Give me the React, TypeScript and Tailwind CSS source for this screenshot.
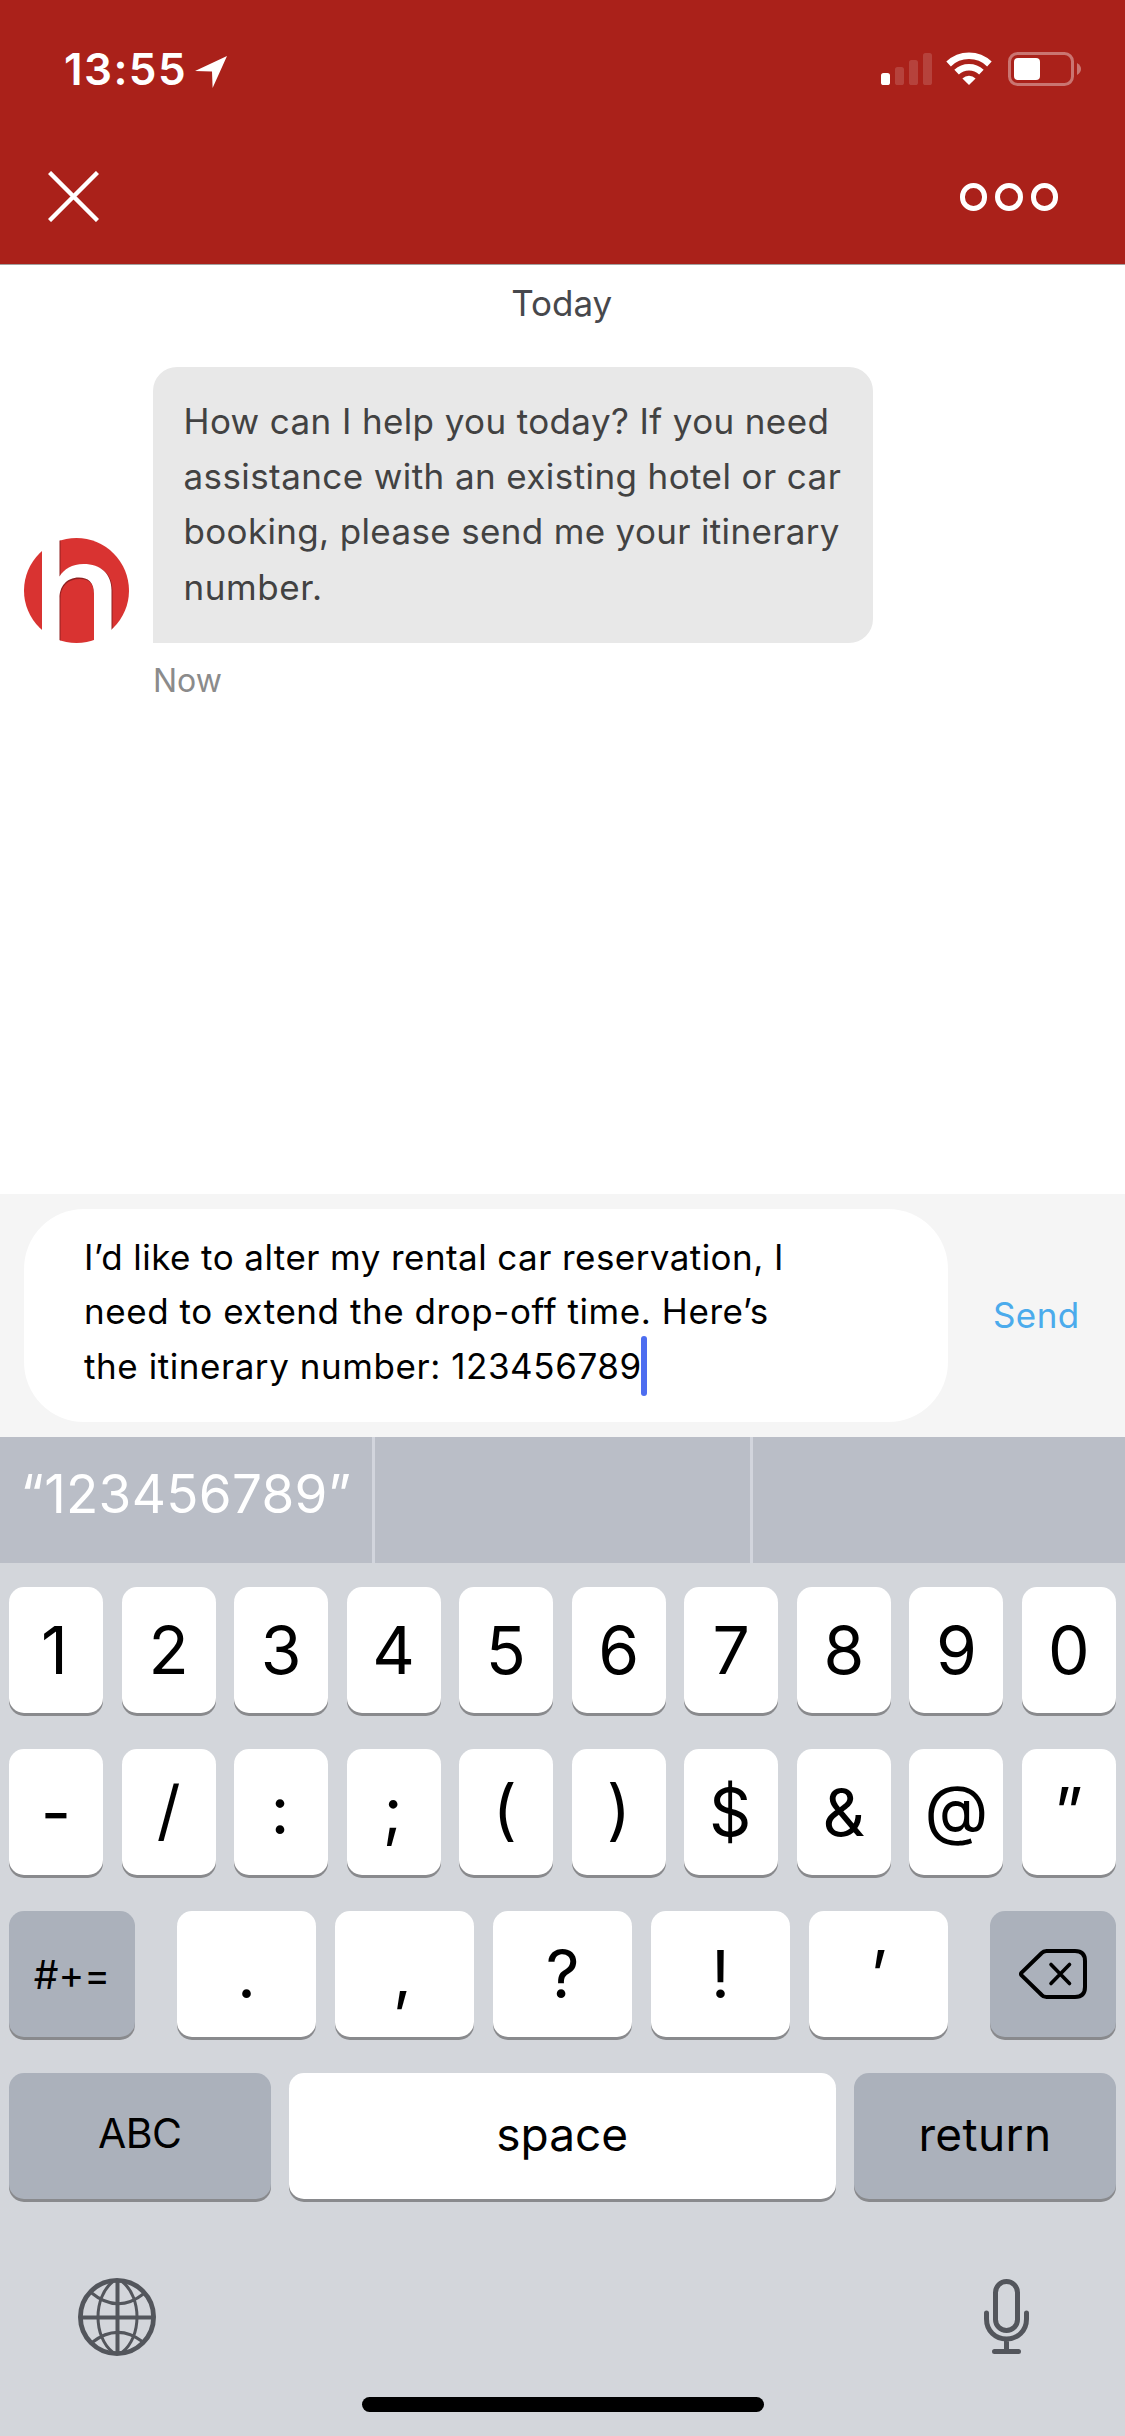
import type { ReactNode } from "react";

function LocationArrow() {
  return (
    <svg width="32" height="32" viewBox="0 0 32 32" className="ml-[8px] mt-[5px] fill-white">
      <path d="M32 0 17.6 32 17 15.4 0 15Z" />
    </svg>
  );
}

function Signal() {
  return (
    <svg width="51" height="34" viewBox="0 0 51 34" className="fill-white">
      <rect x="0" y="21" width="9" height="12" rx="2.6" />
      <g opacity="0.15">
        <rect x="14" y="15" width="9" height="18" rx="2.6" />
        <rect x="28" y="8" width="9" height="25" rx="2.6" />
        <rect x="42" y="1" width="9" height="32" rx="2.6" />
      </g>
    </svg>
  );
}

function Wifi() {
  return (
    <svg width="46" height="34" viewBox="0 0 46 34" className="ml-[14px]">
      <g fill="none" stroke="#fff" strokeWidth="6.6">
        <path d="M2.6 12A29.5 29.5 0 0 1 43.4 12" />
        <path d="M10.6 20.2A18 18 0 0 1 35.4 20.2" />
      </g>
      <path d="M23 33 16.4 26.4A9.4 9.4 0 0 1 29.6 26.4Z" fill="#fff" />
    </svg>
  );
}

function Battery() {
  return (
    <svg width="74" height="34" viewBox="0 0 74 34" className="ml-[16px]">
      <g opacity="0.38">
        <rect x="1.5" y="1.5" width="63" height="31" rx="8" fill="none" stroke="#fff" strokeWidth="3" />
        <path d="M69 11Q73 13.3 73 17T69 23Z" fill="#fff" />
      </g>
      <rect x="6" y="6" width="26" height="22" rx="4" fill="#fff" />
    </svg>
  );
}

function Avatar() {
  return (
    <svg width="105" height="105" viewBox="0 0 105 105" className="shrink-0">
      <defs>
        <clipPath id="disc">
          <circle cx="52.5" cy="52.5" r="52.5" />
        </clipPath>
      </defs>
      <circle cx="52.5" cy="52.5" r="52.5" fill="#d93331" />
      <path
        clipPath="url(#disc)"
        d="M34 0h2.500v105h-2.500ZM37 37C42 29.500 50 27 61 27 79 27 88.500 37 88.500 53V105H70V57C70 46 66 41 56 41 43 41 36.500 49 36.500 60Z"
        fill="#8f2020"
      />
      <path d="M18-2H35.500V38.500C40 31 48 26 59.500 26 77 26 87.500 36 87.500 52V107H70V56C70 44 64 39.500 55 39.500 42 39.500 35.500 49 35.500 60V107H18Z" fill="#fff" />
    </svg>
  );
}

function DeleteIcon() {
  return (
    <svg width="68" height="50" viewBox="0 0 68 50" fill="none" stroke="#000" strokeLinejoin="round" strokeLinecap="round">
      <path d="M27.500 2H56Q66 2 66 12V38Q66 48 56 48H27.500Q24.500 48 22.500 45.800L2.600 26.400Q1.400 25 2.600 23.600L22.500 4.200Q24.500 2 27.500 2Z" strokeWidth="4" />
      <path d="M32 15.500 50.500 34.500M50.500 15.500 32 34.500" strokeWidth="3.600" />
    </svg>
  );
}

function Globe() {
  return (
    <svg width="78" height="78" viewBox="0 0 78 78" fill="none" stroke="#53565c">
      <circle cx="39" cy="39" r="36.600" strokeWidth="4.800" />
      <path d="M39.500 3V75M3 39.500H75" strokeWidth="4" />
      <path d="M35 3.500C15 19 15 59 35 74.500M44 3.500C64 19 64 59 44 74.500M13 14.500Q39.500 36.500 66 15.500M14 64.500Q39.500 44.500 65 64" strokeWidth="3" />
    </svg>
  );
}

function Mic() {
  return (
    <svg width="46" height="76" viewBox="0 0 46 76" fill="none" stroke="#53565c" strokeWidth="5" strokeLinecap="round">
      <rect x="11.500" y="2.500" width="22" height="49" rx="11" />
      <path d="M2.500 34V40C2.500 52 11.500 60 22.500 60S42.500 52 42.500 40V34M22.500 61V72M10.500 72.500H34.500" />
    </svg>
  );
}

function Key({ children, dark = false, size = "w-[94px]" }: { children: ReactNode; dark?: boolean; size?: string }) {
  return (
    <button
      className={`flex h-[126px] items-center justify-center rounded-[15px] text-[66px] leading-none text-black shadow-[0_3px_0_#898a8d] ${
        dark ? "bg-[#abb1bb]" : "bg-white"
      } ${size}`}
    >
      {children}
    </button>
  );
}

// Brackets, colons and similar marks sit slightly above the text baseline on their caps.
const raised: Record<string, string> = {
  "/": "pb-[5px]",
  ":": "pb-[5px] pr-[2px]",
  ";": "pb-[5px] pr-[2px]",
  "(": "pb-[6px] pr-[3px]",
  ")": "pb-[6px]",
  "@": "pb-[7px]",
  "$": "pr-[2px]",
  "”": "pb-[2px] pr-[1px]",
  "1": "pr-[3px]",
  "5": "pr-[1px]",
  ",": "pr-[4px]",
};

export default function App() {
  return (
    <div className="flex h-[2436px] w-[1125px] flex-col overflow-hidden bg-white font-['Inter',sans-serif]">
      <header className="h-[265px] border-b border-[#a3a09f] bg-[#aa211a]">
        <div className="flex h-[138px] items-center justify-between pl-[64px] pr-[43px]">
          <div className="flex items-center">
            <span className="text-[44px] font-[560] leading-none tracking-[1.4px] text-white">13:55</span>
            <LocationArrow />
          </div>
          <div className="flex items-center">
            <Signal />
            <Wifi />
            <Battery />
          </div>
        </div>
        <div className="flex h-[118px] items-center justify-between pl-12 pr-[67px]">
          <svg width="51" height="51" viewBox="0 0 51 51" stroke="#fff" strokeWidth="4.400" className="-mt-px">
            <path d="M1.500 1.500 49.500 49.500M49.500 1.500 1.500 49.500" />
          </svg>
          <div className="flex gap-2">
            <span className="size-[27.3px] rounded-full border-5 border-white" />
            <span className="size-[27.3px] rounded-full border-5 border-white" />
            <span className="size-[27.3px] rounded-full border-5 border-white" />
          </div>
        </div>
      </header>

      <main className="flex flex-1 flex-col">
        <p className="mt-[18px] pr-[1.5px] text-center text-[35px] leading-10 text-[#47484c]">Today</p>
        <div className="mt-11 flex items-end pl-6">
          <Avatar />
          <div className="ml-6 h-[276px] w-[720px] whitespace-nowrap rounded-t-[24px] rounded-br-[24px] bg-[#e8e8e8] pl-[30.5px] pt-[27px] text-[35px] leading-[55.2px] text-[#424242]">
            <p className="tracking-[0.38px]">How can I help you today? If you need</p>
            <p className="tracking-[0.41px]">assistance with an existing hotel or car</p>
            <p className="tracking-[0.34px]">booking, please send me your itinerary</p>
            <p className="tracking-[0.6px]">number.</p>
          </div>
        </div>
        <p className="ml-[153px] mt-[18px] text-[32px] leading-10 text-[#8b8b8b]">Now</p>
      </main>

      <section className="flex h-[243px] items-center bg-[#f5f5f5] pl-6">
        <div className="h-[213px] w-[924px] whitespace-nowrap rounded-[60px] bg-white pl-[60px] pt-[21px] text-[35px] leading-[54.4px] text-black">
          <p className="tracking-[0.43px]">I’d like to alter my rental car reservation, I</p>
          <p className="tracking-[0.56px]">need to extend the drop-off time. Here’s</p>
          <p className="flex h-[54.4px] items-center tracking-[0.56px]">
            the itinerary number: 123456789
            <span className="-ml-px h-[60px] w-[6px] rounded-full bg-[#4d6df0]" />
          </p>
        </div>
        <span className="ml-[45px] text-[35px] leading-none tracking-[0.4px] text-[#4babec]">Send</span>
      </section>

      <section className="flex h-[126px] gap-[3px] bg-[#d2d5dd]">
        <div className="flex w-[372px] items-center bg-[#babec7] pb-[11px] pl-[20.5px] text-[53px] leading-none tracking-[0.3px] text-white">
          “123456789”
        </div>
        <div className="w-[375px] bg-[#babec7]" />
        <div className="w-[372px] bg-[#babec7]" />
      </section>

      <section className="flex h-[873px] flex-col bg-[#d3d6db] px-[9px] pt-6">
        <div className="flex flex-col gap-9">
          <div className="flex justify-between">
            {["1", "2", "3", "4", "5", "6", "7", "8", "9", "0"].map((k) => (
              <Key key={k}>
                <span className={raised[k]}>{k}</span>
              </Key>
            ))}
          </div>
          <div className="flex justify-between">
            {["-", "/", ":", ";", "(", ")", "$", "&", "@", "”"].map((k) => (
              <Key key={k}>
                <span className={raised[k]}>{k}</span>
              </Key>
            ))}
          </div>
          <div className="flex justify-between">
            <Key dark size="w-[126px]">
              <span className="text-[39px]">#+=</span>
            </Key>
            <div className="flex gap-[19px]">
              {[".", ",", "?", "!", "’"].map((k) => (
                <Key key={k} size="w-[139px]">
                  <span className={raised[k]}>{k}</span>
                </Key>
              ))}
            </div>
            <Key dark size="w-[126px]">
              <DeleteIcon />
            </Key>
          </div>
          <div className="flex justify-between">
            <Key dark size="w-[261.5px]">
              <span className="pb-[6px] text-[41px] tracking-[-0.6px]">ABC</span>
            </Key>
            <Key size="w-[547px]">
              <span className="pb-1 text-[46px]">space</span>
            </Key>
            <Key dark size="w-[262px]">
              <span className="pb-1 text-[46px] tracking-[0.4px]">return</span>
            </Key>
          </div>
        </div>
        <div className="mt-[79px] flex h-[78px] items-center justify-between pl-[69px] pr-[86px]">
          <Globe />
          <Mic />
        </div>
        <div className="ml-[353px] mt-[41px] h-[15px] w-[402px] rounded-full bg-black" />
      </section>
    </div>
  );
}
